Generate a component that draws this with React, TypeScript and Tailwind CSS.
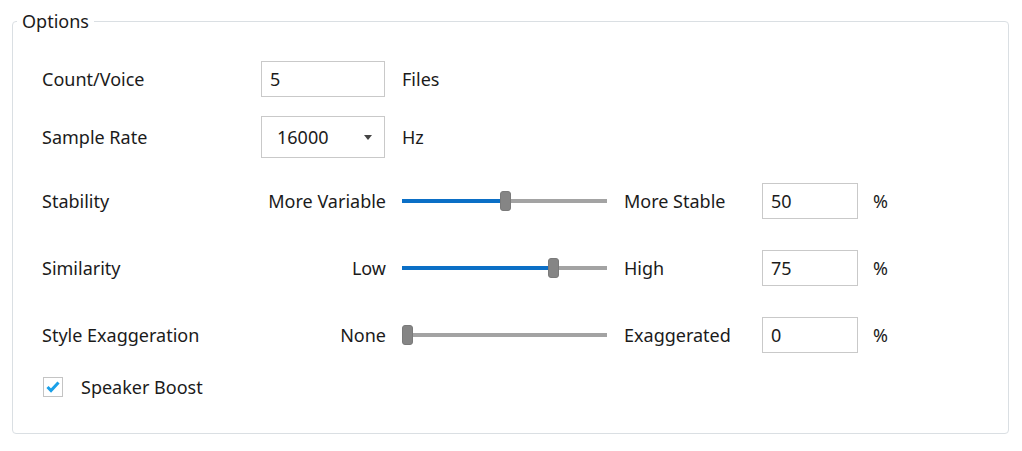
import React from 'react';

const font = { fontFamily: '"Noto Sans", "Open Sans", sans-serif' };

const TextBox: React.FC<{ value: string; width: string }> = ({ value, width }) => (
  <div className={`${width} h-[36px] border border-[#c9c9c9] bg-white flex items-center pl-[8px] text-[18px] text-[#1b1b1b]`}>
    {value}
  </div>
);

const Slider: React.FC<{ value: number }> = ({ value }) => {
  // track is 205px, thumb 10px wide
  const pos = Math.round((205 - 10) * (value / 100));
  return (
    <div className="relative w-[205px] h-[22px] flex items-center">
      <div className="w-full h-[4px] bg-[#a3a3a3]" />
      <div className="absolute left-0 top-[9px] h-[4px] bg-[#0b6fc6]" style={{ width: pos }} />
      <div
        className="absolute top-[1px] w-[11px] h-[20px] rounded-[3px] bg-[#858585] border border-[#7a7a7a]"
        style={{ left: pos }}
      />
    </div>
  );
};

const SliderRow: React.FC<{
  label: string;
  left: string;
  right: string;
  value: number;
  className: string;
}> = ({ label, left, right, value, className }) => (
  <div className={`flex items-center ${className}`}>
    <div className="w-[219px]">{label}</div>
    <div className="w-[125px] text-right">{left}</div>
    <div className="ml-[16px]">
      <Slider value={value} />
    </div>
    <div className="ml-[17px] w-[138px]">{right}</div>
    <TextBox value={String(value)} width="w-[96px]" />
    <div className="ml-[15px]">%</div>
  </div>
);

const App: React.FC = () => {
  return (
    <div className="w-[1022px] h-[451px] bg-white text-[18px] text-[#1b1b1b] pt-[10px] pl-[12px]" style={font}>
      <fieldset className="w-[997px] h-[424px] border border-[#dadfe3] rounded-[4px]">
        <legend className="ml-[4px] px-[5px] text-[18px] leading-[22px]">Options</legend>

        <div className="pl-[29px]">
          <div className="flex items-center mt-[29px] h-[36px]">
            <div className="w-[219px]">Count/Voice</div>
            <TextBox value="5" width="w-[124px]" />
            <div className="ml-[17px]">Files</div>
          </div>

          <div className="flex items-center mt-[19px] h-[42px]">
            <div className="w-[219px]">Sample Rate</div>
            <div className="w-[124px] h-[42px] border border-[#c9c9c9] bg-white flex items-center justify-between pl-[15px] pr-[12px]">
              <span>16000</span>
              <svg width="8" height="5" viewBox="0 0 8 5">
                <path d="M0 0 L8 0 L4 5 Z" fill="#444" />
              </svg>
            </div>
            <div className="ml-[17px]">Hz</div>
          </div>

          <SliderRow label="Stability" left="More Variable" right="More Stable" value={50} className="mt-[25px] h-[36px]" />
          <SliderRow label="Similarity" left="Low" right="High" value={75} className="mt-[31px] h-[36px]" />
          <SliderRow label="Style Exaggeration" left="None" right="Exaggerated" value={0} className="mt-[31px] h-[36px]" />

          <div className="flex items-center mt-[23px] h-[22px]">
            <div className="w-[20px] h-[20px] ml-[1px] border border-[#c4c4c4] bg-white flex items-center justify-center">
              <svg width="14" height="12" viewBox="0 0 14 12">
                <path d="M1.5 6 L5 9.5 L12.5 1.5" stroke="#1aa0e8" strokeWidth="3" fill="none" />
              </svg>
            </div>
            <div className="ml-[18px]">Speaker Boost</div>
          </div>
        </div>
      </fieldset>
    </div>
  );
};

export default App;
